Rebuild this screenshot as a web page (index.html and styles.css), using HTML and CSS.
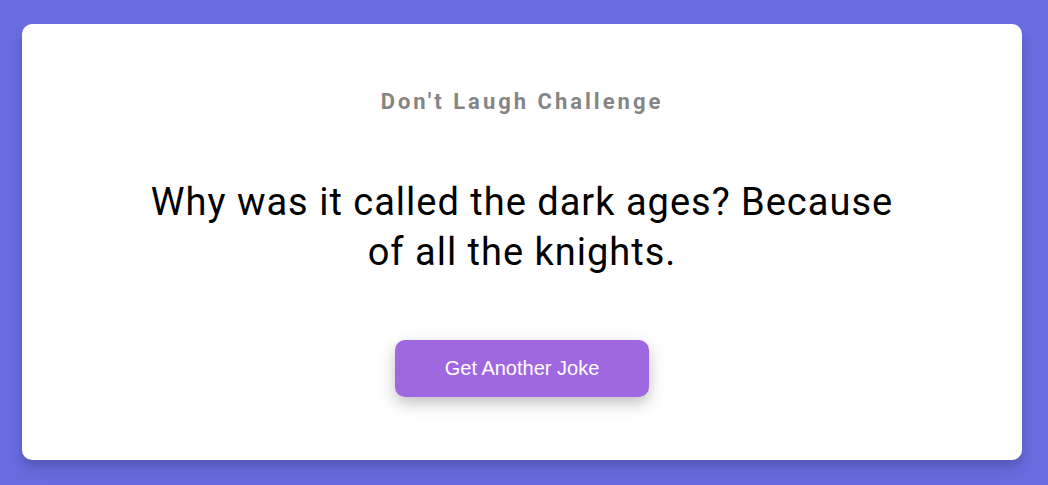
FILE: index.html
```html
<!DOCTYPE html>
<html>
<head>
<meta charset="utf-8">
<link rel="stylesheet" href="styles.css">
</head>
<body>
<div class="page">
  <div class="card">
    <h3 class="title">Don't Laugh Challenge</h3>
    <div class="joke">Why was it called the dark ages? Because of all the knights.</div>
    <button class="btn">Get Another Joke</button>
  </div>
</div>
</body>
</html>
```

FILE: styles.css
```css
* { box-sizing: border-box; }
html, body { margin: 0; padding: 0; }
body {
  background: #686de0;
  width: 1048px;
  height: 485px;
  overflow: hidden;
  font-family: Roboto, "Liberation Sans", sans-serif;
}
.page {
  padding: 24px 26px 25px 22px;
}
.card {
  width: 1000px;
  height: 436px;
  background: #fff;
  border-radius: 10px;
  box-shadow: 0 10px 20px rgba(0, 0, 0, 0.1), 0 6px 6px rgba(0, 0, 0, 0.1);
  padding: 65px 100px 63px;
  display: flex;
  flex-direction: column;
  align-items: center;
  text-align: center;
}
.title {
  margin: 0;
  font-size: 22px;
  line-height: 26px;
  font-weight: 700;
  letter-spacing: 3px;
  color: #858585;
}
.joke {
  margin-top: 62px;
  font-size: 38px;
  line-height: 50px;
  letter-spacing: 1px;
  color: #000;
  max-width: 770px;
}
.btn {
  margin-top: 63px;
  background: #9f68e0;
  color: #fff;
  border: 0;
  border-radius: 10px;
  font-family: "Liberation Sans", Arial, sans-serif;
  font-size: 20px;
  line-height: 23px;
  padding: 17px 50px;
  box-shadow: 0 6px 15px rgba(0, 0, 0, 0.25);
}
```
